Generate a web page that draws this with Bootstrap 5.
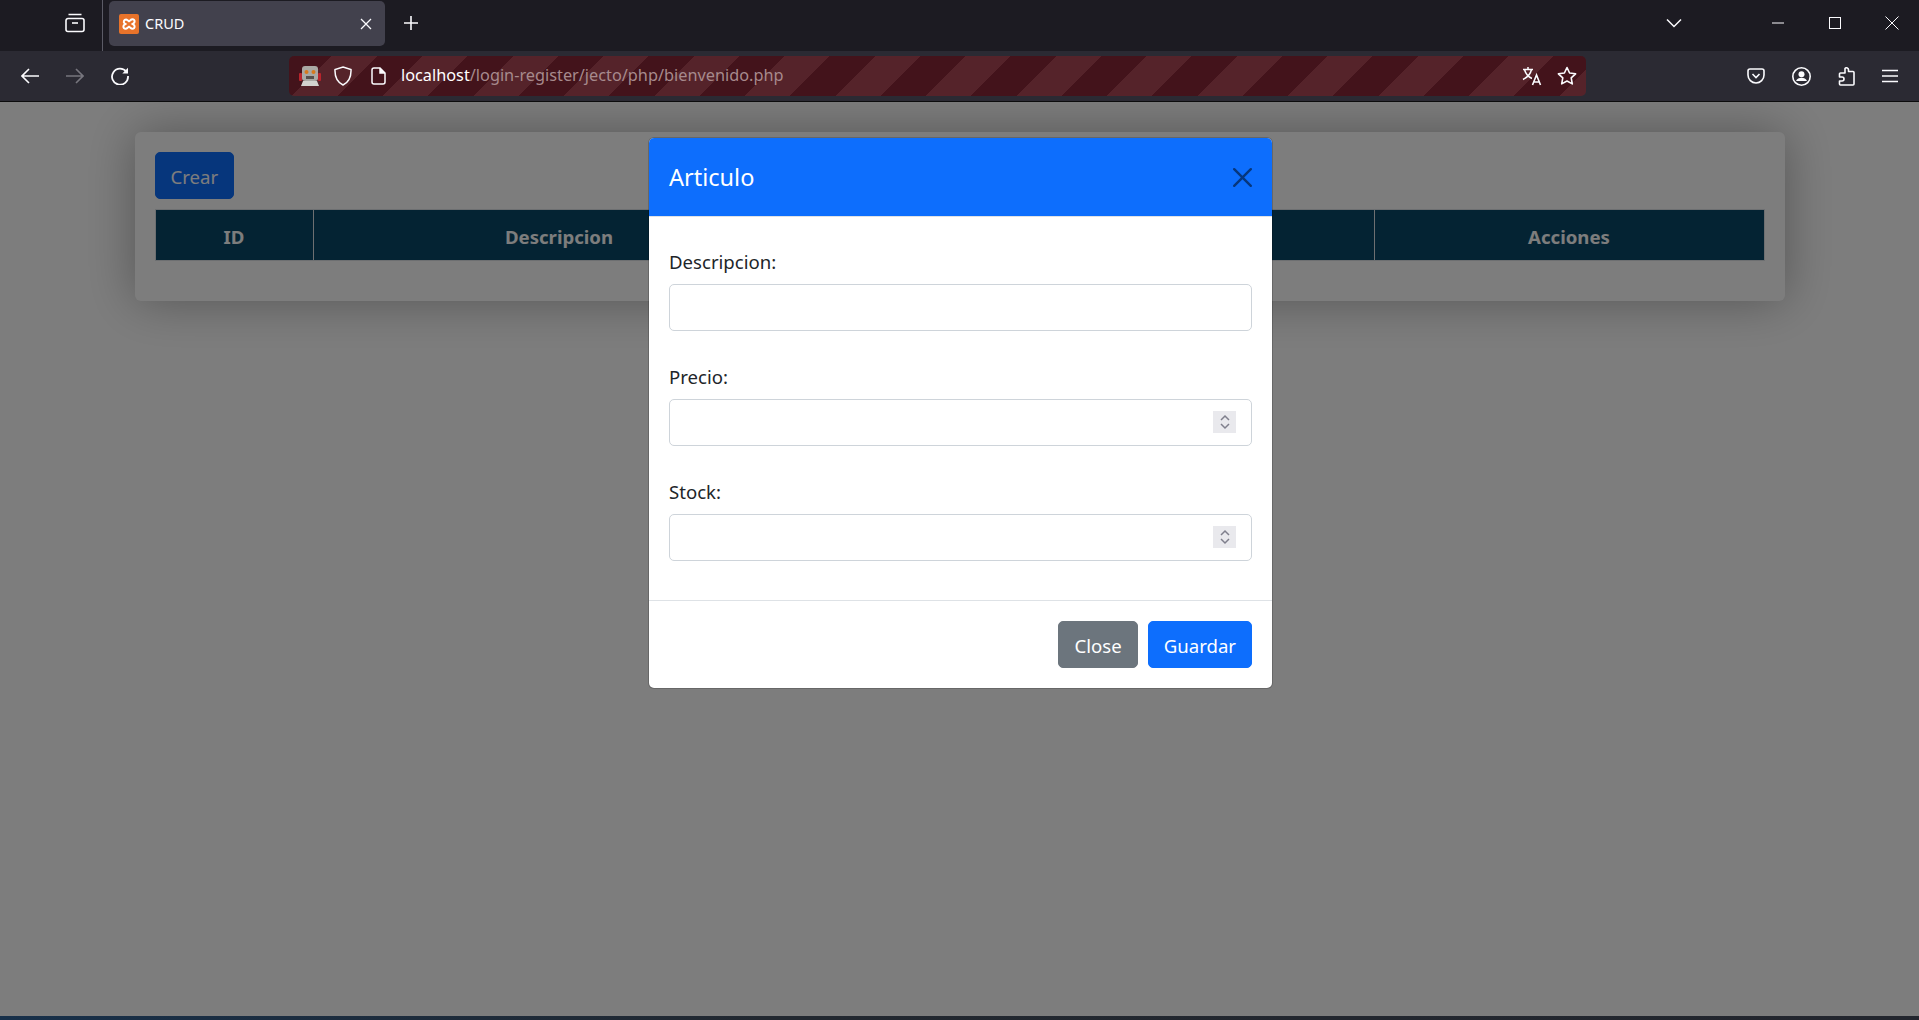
<!DOCTYPE html>
<html lang="es">
<head>
  <meta charset="UTF-8" />
  <meta name="viewport" content="width=device-width, initial-scale=1" />
  <title>CRUD</title>
  <link href="https://cdn.jsdelivr.net/npm/bootstrap@5.3.3/dist/css/bootstrap.min.css" rel="stylesheet" />
  <style>
    html { font-size: 20px; }
    :root { --bs-body-font-size: 18.6px; --bs-body-line-height: 1.613; --bs-border-radius: 5px; }
    html, body { height: 1020px; overflow: hidden; }
    body { font-family: "Noto Sans", "Open Sans", sans-serif; background: #fff; }
    svg { display: block; flex: none; }

    /* browser chrome */
    .tabstrip { height: 51px; padding-bottom: 5px; background: #1c1b22; color: #fbfbfe; }
    .view-btn { width: 103px; padding: 0 0 5px 65px; height: 51px; border-right: 1px solid #5b5b66; align-self: flex-start; }
    .tab-item { width: 276px; height: 45px; margin: 1px 0 0 6px; padding: 0 13px 0 10px; background: #42414d; border-radius: 5px; font-size: 14.5px; }
    .tab-item .favicon { margin-right: 6px; }
    .new-tab { margin-left: 18px; }
    .win-btns { margin-left: auto; }
    .win-btns .tabs-down { margin-right: 90px; }
    .win-btns .win-min { margin-right: 45px; }
    .win-btns .win-max { margin-right: 44px; }
    .win-btns .win-close { margin-right: 20px; }
    .toolbar { height: 51px; background: #2b2a33; border-bottom: 1px solid #0c0c0d; color: #fbfbfe; padding-left: 21px; }
    .nav-icons { gap: 27px; width: 268px; }
    .url-bar { width: 1297px; height: 40px; border-radius: 5px; padding: 0 9px 0 10px; margin-top: -1px;
      background: repeating-linear-gradient(-45deg, #55232a -13px, #55232a 19px, #43131b 19px, #43131b 51px); }
    .url-shield { margin-left: 13px; }
    .url-page { margin-left: 19px; }
    .url-text { font-size: 16.3px; margin-left: 15px; white-space: nowrap; color: #a78a8d; }
    .url-text b { font-weight: 400; color: #fff; }
    .url-right { margin-left: auto; gap: 15px; }
    .tool-right { margin-left: 161px; gap: 27px; }

    /* page */
    .page-area { position: relative; height: 914px; overflow: hidden; }
    .crud-box.container { max-width: 1650px; margin-top: 30px; padding: 20px; border-radius: 6px; box-shadow: 0 0 50px rgba(0,0,0,.32); }
    .btn { --bs-btn-font-size: 18.6px; --bs-btn-line-height: 1.613; --bs-btn-border-radius: 5px; padding-top: 8.5px; padding-bottom: 6.5px; }
    .form-control { font-size: 18.6px; line-height: 1.613; border-radius: 5px; border-color: #ced4da; }
    .crud-table { table-layout: fixed; }
    .crud-table th { background: #0a4868; color: #fff; height: 51px; padding: 5px 0 0; vertical-align: middle; border-color: #dee2e6; }
    .col-id { width: 158px; }
    .col-desc { width: 492px; }
    .col-acc { width: 390px; }
    .page-area .modal-backdrop { position: absolute; width: 100%; height: 100%; opacity: .51; }
    .page-area .modal { position: absolute; height: 100%; overflow: hidden; padding-left: 2px; --bs-modal-width: 625px; }
    .page-area .modal-dialog { margin-top: 35px; }
    .modal-content { border-radius: 6px; }
    .modal-header { background: #0d6efd; color: #fff; border-radius: 5px 5px 0 0; }
    .modal-header .modal-title { font-size: 23.5px; font-weight: 400; line-height: 38px; }
    .dialog-form { padding-top: 10px; }
    .field-group { margin-bottom: 31px; }
    .field-last { margin-bottom: 19.5px; }
    .field-label { margin-bottom: 7px; }
    .num-wrap { position: relative; }
    .spin-box { position: absolute; right: 16px; top: 12px; width: 23px; height: 22px; background: #e9e9ed; }
    .taskbar { height: 4px; background: linear-gradient(90deg, #17304a, #222830 40%, #23262e); }
  </style>
</head>
<body>
  <!-- tab strip -->
  <div class="tabstrip d-flex align-items-center">
    <div class="view-btn d-flex align-items-center">
      <svg width="20" height="20" viewBox="0 0 20 20" fill="none" stroke="#fbfbfe" stroke-width="1.6"><path d="M3.5 1.5h13M1 7.5a2 2 0 0 1 2-2h14a2 2 0 0 1 2 2v9a2 2 0 0 1-2 2H3a2 2 0 0 1-2-2z"/><path d="M7 10h6"/></svg>
    </div>
    <div class="tab-item d-flex align-items-center">
      <svg class="favicon" width="20" height="20" viewBox="0 0 20 20"><rect width="20" height="20" rx="2" fill="#e8732a"/><path d="M7 5.5a2.2 2.2 0 0 0-1.5 3.8L6.500 10l-1 .7A2.200 2.200 0 1 0 8.300 14L10 12.800 11.700 14a2.200 2.200 0 1 0 2.800-3.300l-1-.7 1-.7A2.200 2.200 0 1 0 11.700 6L10 7.200 8.300 6A2.200 2.200 0 0 0 7 5.500z" fill="none" stroke="#fff" stroke-width="2"/></svg>
      <span>CRUD</span>
      <svg class="ms-auto" width="12" height="12" viewBox="0 0 12 12" stroke="#fbfbfe" stroke-width="1.300"><path d="M1 1l10 10M11 1L1 11"/></svg>
    </div>
    <svg class="new-tab" width="16" height="16" viewBox="0 0 16 16" stroke="#fbfbfe" stroke-width="1.600"><path d="M8 1v14M1 8h14"/></svg>
    <div class="win-btns d-flex align-items-center">
      <svg class="tabs-down" width="16" height="10" viewBox="0 0 16 10" fill="none" stroke="#fbfbfe" stroke-width="1.500"><path d="M1 1.500l7 7 7-7"/></svg>
      <svg class="win-min" width="12" height="2" viewBox="0 0 12 2" stroke="#fbfbfe"><path d="M0 1h12"/></svg>
      <svg class="win-max" width="12" height="12" viewBox="0 0 12 12" fill="none" stroke="#fbfbfe"><rect x=".5" y=".5" width="11" height="11"/></svg>
      <svg class="win-close" width="14" height="14" viewBox="0 0 14 14" stroke="#fbfbfe"><path d="M.5.5l13 13M13.500.5l-13 13"/></svg>
    </div>
  </div>

  <!-- toolbar -->
  <div class="toolbar d-flex align-items-center">
    <div class="nav-icons d-flex align-items-center">
      <svg width="18" height="16" viewBox="0 0 18 16" fill="none" stroke="#fbfbfe" stroke-width="1.600"><path d="M18 8H1.500M8 1L1 8l7 7"/></svg>
      <svg width="18" height="16" viewBox="0 0 18 16" fill="none" stroke="#77767e" stroke-width="1.600"><path d="M0 8h16.500M10 1l7 7-7 7"/></svg>
      <svg width="18" height="18" viewBox="0 0 18 18" fill="none" stroke="#fbfbfe" stroke-width="1.800"><path d="M15.500 5A8 8 0 1 0 17 9"/><path d="M17 .8v5.700h-5.700z" fill="#fbfbfe" stroke="none"/></svg>
    </div>
    <div class="url-bar d-flex align-items-center">
      <svg width="22" height="22" viewBox="0 0 22 22"><rect x="0" y="8" width="3" height="8" rx="1" fill="#b8242c"/><rect x="19" y="8" width="3" height="8" rx="1" fill="#b8242c"/><rect x="3" y="1" width="16" height="15" rx="3" fill="#a9a9a4"/><circle cx="7.500" cy="7" r="2" fill="#d77a1e"/><circle cx="14.500" cy="7" r="2" fill="#d77a1e"/><rect x="7" y="11" width="8" height="3" fill="#57504c"/><path d="M2 21l2-5h14l2 5z" fill="#d3d3cf"/></svg>
      <svg class="url-shield" width="18" height="20" viewBox="0 0 18 20" fill="none" stroke="#fbfbfe" stroke-width="1.500"><path d="M9 1l8 2.500c.3 7-2 12.500-8 15.500C3 16 .7 10.500 1 3.500z"/></svg>
      <svg class="url-page" width="15" height="18" viewBox="0 0 15 18" fill="none" stroke="#fbfbfe" stroke-width="1.500"><path d="M3 1h6l5 5v9a2 2 0 0 1-2 2H3a2 2 0 0 1-2-2V3a2 2 0 0 1 2-2z"/><path d="M9 1v5h5" fill="#fbfbfe"/></svg>
      <span class="url-text"><b>localhost</b>/login-register/jecto/php/bienvenido.php</span>
      <div class="url-right d-flex align-items-center">
        <svg width="20" height="20" viewBox="0 0 20 20" fill="none" stroke="#fbfbfe" stroke-width="1.500"><path d="M1 3.500h10M6 1v2.500M9.500 3.500C8.500 8 5 11.500 1 13.500M2.500 3.500c1 4 4 7.500 7.500 9"/><path d="M10.500 19l4-10 4 10M12 16h5" stroke-width="1.600"/></svg>
        <svg width="20" height="20" viewBox="0 0 20 20" fill="none" stroke="#fbfbfe" stroke-width="1.600" stroke-linejoin="round"><path d="M10 1.500l2.600 5.500 6 .8-4.400 4.100 1.100 6L10 15l-5.300 2.900 1.100-6L1.400 7.800l6-.8z"/></svg>
      </div>
    </div>
    <div class="tool-right d-flex align-items-center">
      <svg width="18" height="16" viewBox="0 0 18 16" fill="none" stroke="#fbfbfe" stroke-width="1.600"><path d="M3 1h12a2 2 0 0 1 2 2v4a8 8 0 0 1-16 0V3a2 2 0 0 1 2-2z"/><path d="M5.500 6L9 9.500 12.500 6"/></svg>
      <svg width="19" height="19" viewBox="0 0 19 19" fill="none" stroke="#fbfbfe" stroke-width="1.600"><circle cx="9.500" cy="9.500" r="8.700"/><circle cx="9.500" cy="7.200" r="3" fill="#fbfbfe" stroke="none"/><path d="M4 14c1-2.500 3-3.200 5.500-3.200S14 11.500 15 14z" fill="#fbfbfe" stroke="none"/></svg>
      <svg width="17" height="19" viewBox="0 0 17 19" fill="none" stroke="#fbfbfe" stroke-width="1.600" stroke-linejoin="round"><path d="M7 1.500a2 2 0 0 1 3.500 1.500v1.500H15a1 1 0 0 1 1 1V17a1 1 0 0 1-1 1H2.500a1 1 0 0 1-1-1v-3H4a2 2 0 0 0 0-4H1.500V7a1 1 0 0 1 1-1H7z"/></svg>
      <svg width="16" height="14" viewBox="0 0 16 14" stroke="#fbfbfe" stroke-width="1.600"><path d="M0 1.500h16M0 7h16M0 12.500h16"/></svg>
    </div>
  </div>

  <!-- page with dialog open -->
  <div class="page-area">
    <div class="container crud-box bg-white">
      <button class="btn btn-primary mb-2">Crear</button>
      <table class="table table-bordered text-center crud-table mb-3">
        <colgroup>
          <col class="col-id"><col class="col-desc"><col><col><col class="col-acc">
        </colgroup>
        <thead>
          <tr>
            <th>ID</th>
            <th>Descripcion</th>
            <th>Precio</th>
            <th>Stock</th>
            <th>Acciones</th>
          </tr>
        </thead>
      </table>
    </div>

    <div class="modal-backdrop show"></div>

    <div class="modal d-block" tabindex="-1">
      <div class="modal-dialog">
        <div class="modal-content">
          <div class="modal-header">
            <h5 class="modal-title">Articulo</h5>
            <button type="button" class="btn-close" aria-label="Close"></button>
          </div>
          <div class="modal-body">
            <form class="dialog-form">
              <div class="field-group">
                <label class="form-label field-label" for="descripcion">Descripcion:</label>
                <input class="form-control" id="descripcion" type="text">
              </div>
              <div class="field-group">
                <label class="form-label field-label" for="precio">Precio:</label>
                <div class="num-wrap">
                  <input class="form-control" id="precio" type="text">
                  <div class="spin-box d-flex align-items-center justify-content-center">
                    <svg width="10" height="16" viewBox="0 0 10 16" fill="none" stroke="#7f7f8c" stroke-width="1.500"><path d="M1 6l4-4 4 4M1 10l4 4 4-4"/></svg>
                  </div>
                </div>
              </div>
              <div class="field-last">
                <label class="form-label field-label" for="stock">Stock:</label>
                <div class="num-wrap">
                  <input class="form-control" id="stock" type="text">
                  <div class="spin-box d-flex align-items-center justify-content-center">
                    <svg width="10" height="16" viewBox="0 0 10 16" fill="none" stroke="#7f7f8c" stroke-width="1.500"><path d="M1 6l4-4 4 4M1 10l4 4 4-4"/></svg>
                  </div>
                </div>
              </div>
            </form>
          </div>
          <div class="modal-footer">
            <button type="button" class="btn btn-secondary">Close</button>
            <button type="button" class="btn btn-primary">Guardar</button>
          </div>
        </div>
      </div>
    </div>
  </div>
  <div class="taskbar"></div>

  <script src="https://cdn.jsdelivr.net/npm/bootstrap@5.3.3/dist/js/bootstrap.bundle.min.js"></script>
</body>
</html>
